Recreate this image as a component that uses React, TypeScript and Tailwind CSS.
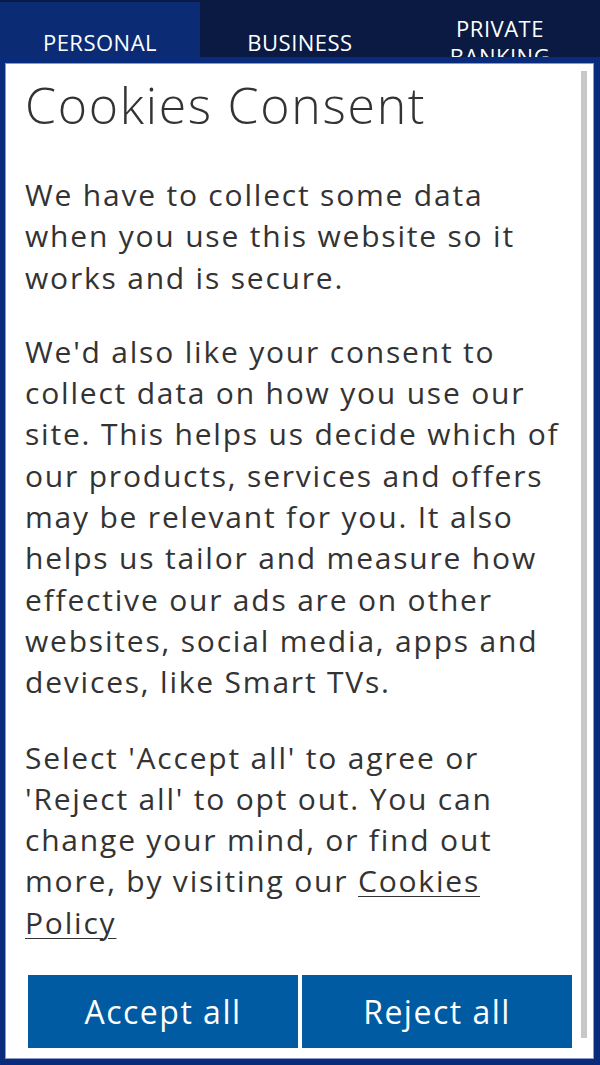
const tabs = [
  { label: 'PERSONAL', active: true },
  { label: 'BUSINESS', active: false },
  { label: 'PRIVATE BANKING', active: false },
]

function TopNav() {
  return (
    <nav className="grid h-[58px] grid-cols-3 overflow-hidden bg-[#0a1a42]">
      {tabs.map((t) => (
        <div
          key={t.label}
          className={`mt-[2px] flex h-[80px] items-center justify-center px-6 text-center text-[22px] leading-[28px] tracking-[0.5px] text-white ${
            t.active ? 'bg-[#0b2c74]' : ''
          }`}
        >
          <span className="w-[120px]">{t.label}</span>
        </div>
      ))}
    </nav>
  )
}

function CookiesModal() {
  return (
    <div className="fixed inset-x-0 bottom-0 top-[57px] bg-[#082b7c] pb-[6px] pl-[5px] pr-[6px] pt-[6px]">
      <div className="flex h-full border border-[#8a9cc4] bg-white">
        <div className="flex min-w-0 flex-1 flex-col pl-[19px] pr-[10px]">
          <h1 className="pt-[11px] text-[50px] font-light leading-[60px] tracking-[1.7px] text-[#333]">
            Cookies Consent
          </h1>
          <div className="mt-[39px] text-[30px] leading-[41.3px] tracking-[1.8px] text-[#333]">
            <p>We have to collect some data when you use this website so it works and is secure.</p>
            <p className="mt-[33px]">
              We'd also like your consent to collect data on how you use our site. This helps us decide which of our
              products, services and offers may be relevant for you. It also helps us tailor and measure how effective
              our ads are on other websites, social media, apps and devices, like Smart TVs.
            </p>
            <p className="mt-[34px]">
              Select 'Accept all' to agree or 'Reject all' to opt out. You can change your mind, or find out more, by
              visiting our <a className="underline decoration-1 underline-offset-4">Cookies Policy</a>
            </p>
          </div>
          <div className="ml-[3px] mt-[32px] grid w-[544px] grid-cols-2 gap-[4px]">
            <button className="h-[73px] bg-[#005ba2] text-[32px] tracking-[1.5px] text-white">Accept all</button>
            <button className="h-[73px] bg-[#005ba2] text-[32px] tracking-[1.5px] text-white">Reject all</button>
          </div>
        </div>
        <div className="mr-[6px] pb-[20px] pt-[7px]">
          <div className="h-full w-[6px] bg-[#c8c8c8]" />
        </div>
      </div>
    </div>
  )
}

export default function App() {
  return (
    <div className="min-h-[1065px] bg-[#082b7c] font-['Open_Sans',sans-serif]">
      <TopNav />
      <CookiesModal />
    </div>
  )
}
